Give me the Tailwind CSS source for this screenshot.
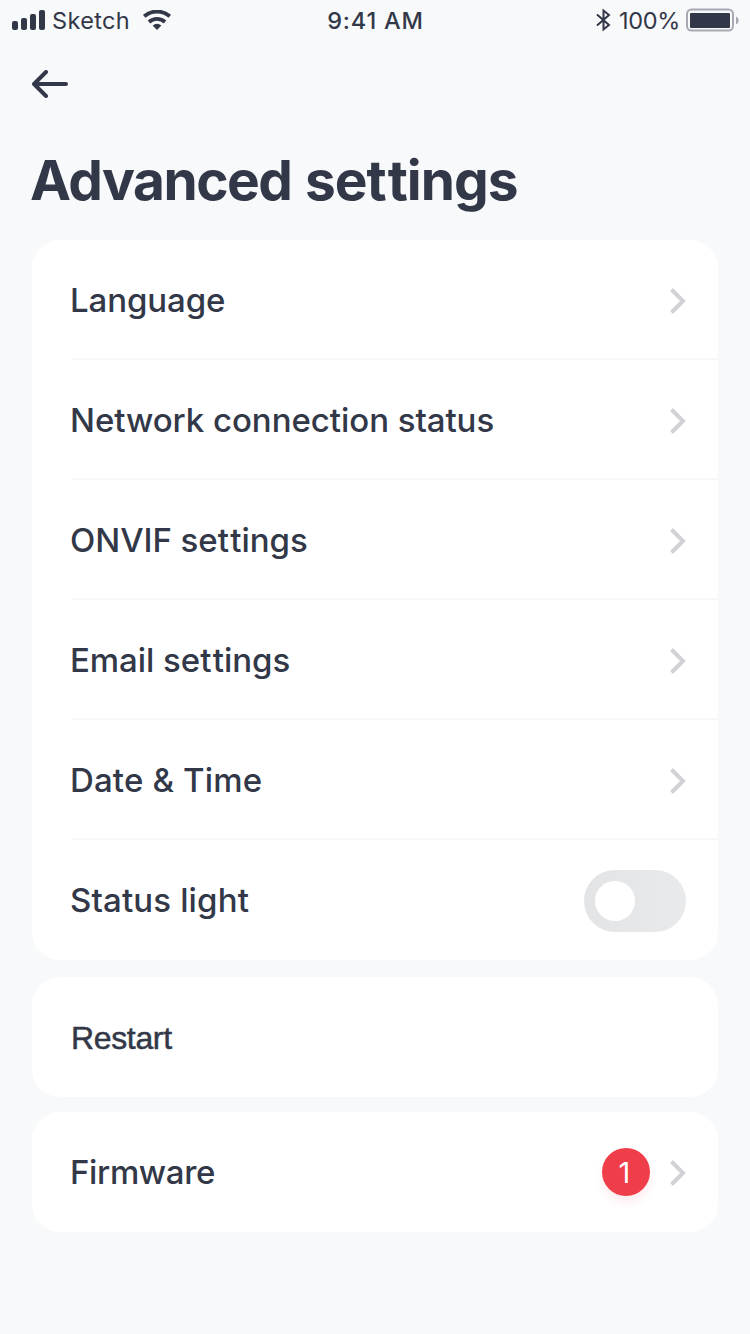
<!DOCTYPE html>
<html lang="en">
<head>
    <meta charset="UTF-8">
    <meta name="viewport" content="width=device-width, initial-scale=1.0">
    <title>Advanced settings</title>
    <script src="https://cdn.jsdelivr.net/npm/@tailwindcss/browser@4"></script>
</head>
<body class="min-h-screen bg-[#f8f9fb] text-[#323848] font-['Inter',sans-serif] overflow-hidden">

    <!-- Status bar -->
    <div class="grid grid-cols-3 items-center h-10 pl-3 pr-[11px] text-[23.5px] leading-[38px]">
        <div class="flex items-center">
            <svg class="w-[33px] h-5" viewBox="0 0 33 20" fill="currentColor">
                <rect x="0" y="11" width="6" height="9" rx="2"/>
                <rect x="9" y="8" width="6" height="12" rx="2"/>
                <rect x="18" y="4" width="6" height="16" rx="2"/>
                <rect x="27" y="0" width="6" height="20" rx="2"/>
            </svg>
            <span class="ml-[7px] pt-[2px] tracking-[0.35px]">Sketch</span>
            <svg class="ml-3 w-[30px] h-5" viewBox="0 0 30 20" fill="none" stroke="currentColor" stroke-width="3.8">
                <path d="M2.200 6.300A19.500 19.500 0 0 1 27.800 6.300"/>
                <path d="M7 12A12 12 0 0 1 23 12"/>
                <path d="M15 20L10.600 15.600A7 7 0 0 1 19.400 15.600Z" fill="currentColor" stroke="none"/>
            </svg>
        </div>
        <div class="pt-[2px] text-center font-[550] tracking-[0.8px]">9:41 AM</div>
        <div class="flex items-center justify-end">
            <svg class="w-4 h-6" viewBox="0 0 16 24" fill="none" stroke="currentColor" stroke-width="2">
                <path d="M2 6.500L14 17L8.500 21.500V2.500L14 7L2 17.500"/>
            </svg>
            <span class="ml-2 pt-[2px] tracking-[-0.3px]">100%</span>
            <svg class="ml-[6px] w-[53px] h-6" viewBox="0 0 53 24">
                <rect x="1" y="1.500" width="46" height="21" rx="4.500" fill="none" stroke="#a7aab3" stroke-width="2"/>
                <rect x="4" y="5" width="40" height="15" rx="1" fill="#323848"/>
                <path d="M50 8.500C53.600 10 53.600 15 50 16.500Z" fill="#a7aab3"/>
            </svg>
        </div>
    </div>

    <!-- Header -->
    <header class="px-8 pt-[30px] h-[200px]">
        <svg class="w-9 h-7" viewBox="0 0 36 28" fill="none" stroke="currentColor" stroke-width="4" stroke-linecap="round" stroke-linejoin="round">
            <path d="M34 14H2.500M14 2L2 14L14 26"/>
        </svg>
        <h1 class="mt-[47px] -ml-[2px] text-[55px] leading-[70px] font-bold tracking-[-1.5px] whitespace-nowrap">Advanced <span class="ml-[2px] tracking-[-1px]">set<span class="ml-[2px]">tings</span></span></h1>
    </header>

    <main class="px-8 text-[33px] font-[480]">
        <div class="bg-white rounded-[28px] pl-[39px]">
            <div class="flex items-center justify-between h-30 pt-1 pr-8 border-b-2 border-[#f8f8fa]">
                <span class="-ml-px tracking-[-0.1px]">Language</span>
                <svg class="w-4 h-7" viewBox="0 0 16 28" fill="none" stroke="#d1d2d6" stroke-width="4"><path d="M1.500 2.500L13 14L1.500 25.500"/></svg>
            </div>
            <div class="flex items-center justify-between h-30 pt-1 pr-8 border-b-2 border-[#f8f8fa]">
                <span class="-ml-px tracking-[-0.05px]">Network connection status</span>
                <svg class="w-4 h-7" viewBox="0 0 16 28" fill="none" stroke="#d1d2d6" stroke-width="4"><path d="M1.500 2.500L13 14L1.500 25.500"/></svg>
            </div>
            <div class="flex items-center justify-between h-30 pt-1 pr-8 border-b-2 border-[#f8f8fa]">
                <span class="-ml-px tracking-[-0.05px]">ONVIF set<span class="ml-[1.5px]">tings</span></span>
                <svg class="w-4 h-7" viewBox="0 0 16 28" fill="none" stroke="#d1d2d6" stroke-width="4"><path d="M1.500 2.500L13 14L1.500 25.500"/></svg>
            </div>
            <div class="flex items-center justify-between h-30 pt-1 pr-8 border-b-2 border-[#f8f8fa]">
                <span class="-ml-px tracking-[-0.05px]">Email set<span class="ml-[1.5px]">tings</span></span>
                <svg class="w-4 h-7" viewBox="0 0 16 28" fill="none" stroke="#d1d2d6" stroke-width="4"><path d="M1.500 2.500L13 14L1.500 25.500"/></svg>
            </div>
            <div class="flex items-center justify-between h-30 pt-1 pr-8 border-b-2 border-[#f8f8fa]">
                <span class="-ml-px tracking-[0.15px]">Date &amp; Time</span>
                <svg class="w-4 h-7" viewBox="0 0 16 28" fill="none" stroke="#d1d2d6" stroke-width="4"><path d="M1.500 2.500L13 14L1.500 25.500"/></svg>
            </div>
            <div class="flex items-center justify-between h-30 pt-[2px] pr-8">
                <span class="-ml-px tracking-[0.15px]">Status light</span>
                <div class="flex items-center w-[102px] h-[62px] pl-[11px] rounded-full bg-linear-to-r from-[#e3e4e6] to-[#e9eaec]">
                    <div class="size-10 rounded-full bg-white"></div>
                </div>
            </div>
        </div>

        <div class="flex items-center h-30 mt-[17px] pt-[2px] pl-[39px] bg-white rounded-[28px]">
            <span class="font-['Liberation_Sans',sans-serif] font-normal text-[32px] tracking-[-0.35px] [-webkit-text-stroke:0.5px_#323848]">Restart</span>
        </div>

        <div class="flex items-center h-30 mt-[15px] pt-[2px] pl-[39px] pr-8 bg-white rounded-[28px]">
            <span class="-ml-px tracking-[-0.35px]">Firmware</span>
            <div class="flex items-center justify-center size-12 -mt-[2px] ml-auto mr-5 rounded-full bg-[#f03d4a] text-white text-[29px] font-normal shadow-[0_6px_10px_rgba(240,61,74,0.1)]"><span class="-ml-[3px] mt-px">1</span></div>
            <svg class="w-4 h-7" viewBox="0 0 16 28" fill="none" stroke="#d1d2d6" stroke-width="4"><path d="M1.500 2.500L13 14L1.500 25.500"/></svg>
        </div>
    </main>

</body>
</html>
